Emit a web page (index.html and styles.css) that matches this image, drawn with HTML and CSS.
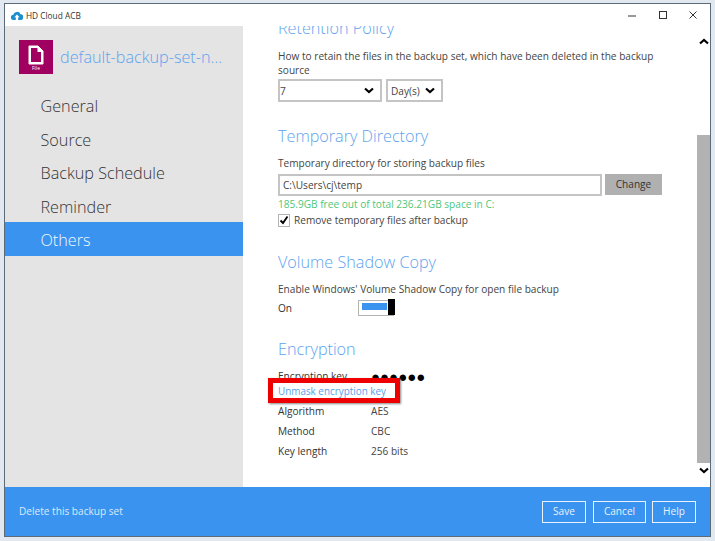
FILE: index.html
```html
<!DOCTYPE html>
<html lang="en">
<head>
<meta charset="utf-8">
<title>HD Cloud ACB</title>
<link rel="stylesheet" href="styles.css">
</head>
<body>
<div class="window">
  <header class="titlebar">
    <svg class="app-icon" viewBox="0 0 12 9" width="12" height="9"><path fill="#1c8fd0" d="M2.6 9A2.6 2.6 0 0 1 2.3 3.8 3.8 3.8 0 0 1 9.5 3.2 2.9 2.9 0 0 1 9.4 9H7.2V6.2H8.6L6 3.6 3.4 6.2H4.8V9Z"/></svg>
    <span class="app-title">HD Cloud ACB</span>
    <div class="win-controls">
      <svg viewBox="0 0 10 10" width="10" height="10"><path d="M1 6H9" stroke="#333" fill="none"/></svg>
      <svg viewBox="0 0 10 10" width="10" height="10"><rect x="1.5" y="1.5" width="7" height="7" stroke="#333" fill="none"/></svg>
      <svg viewBox="0 0 10 10" width="10" height="10"><path d="M1.500 1.500L8.500 8.500M8.500 1.500L1.500 8.500" stroke="#333" fill="none"/></svg>
    </div>
  </header>
  <div class="body">
    <nav class="sidebar">
      <div class="set-head">
        <div class="file-badge">
          <svg viewBox="0 0 16 20" width="16" height="20"><path d="M1 1H10L15 6V19H1Z" fill="#fff" stroke="#fff"/><path d="M3 3H9.500L13 6.500V17H3Z" fill="#a0005f"/><path d="M9.500 2V7H14.500Z" fill="#fff"/></svg>
          <span>File</span>
        </div>
        <span class="set-name">default-backup-set-n...</span>
      </div>
      <a class="nav-item">General</a>
      <a class="nav-item">Source</a>
      <a class="nav-item">Backup Schedule</a>
      <a class="nav-item">Reminder</a>
      <a class="nav-item active">Others</a>
    </nav>
    <main class="pane">
      <div class="scroll">
        <section class="retention">
          <h2>Retention Policy</h2>
          <p class="desc">How to retain the files in the backup set, which have been deleted in the backup source</p>
          <div class="row-selects">
            <div class="select num"><span>7</span><svg class="chev" viewBox="0 0 10 7" width="10" height="7"><path d="M1 1.500L5 5L9 1.500" stroke="#000" stroke-width="2.200" fill="none"/></svg></div>
            <div class="select unit"><span>Day(s)</span><svg class="chev" viewBox="0 0 10 7" width="10" height="7"><path d="M1 1.500L5 5L9 1.500" stroke="#000" stroke-width="2.200" fill="none"/></svg></div>
          </div>
        </section>
        <section class="temp">
          <h2>Temporary Directory</h2>
          <p class="desc">Temporary directory for storing backup files</p>
          <div class="row-path">
            <div class="path">C:\Users\cj\temp</div>
            <div class="change">Change</div>
          </div>
          <p class="free">185.9GB free out of total 236.21GB space in C:</p>
          <div class="check-row">
            <span class="check"><svg viewBox="0 0 10 10" width="10" height="10"><path d="M1.500 5.500L4 8L8.500 1.500" stroke="#000" stroke-width="1.800" fill="none"/></svg></span>
            <span>Remove temporary files after backup</span>
          </div>
        </section>
        <section class="vss">
          <h2>Volume Shadow Copy</h2>
          <p class="desc">Enable Windows' Volume Shadow Copy for open file backup</p>
          <div class="toggle-row">
            <span class="toggle-label">On</span>
            <span class="toggle"><span class="fill"></span><span class="knob"></span></span>
          </div>
        </section>
        <section class="enc">
          <h2>Encryption</h2>
          <div class="kv key"><span class="k">Encryption key</span><span class="dots">●●●●●●</span></div>
          <div class="unmask"><a>Unmask encryption key</a></div>
          <div class="kv"><span class="k">Algorithm</span><span>AES</span></div>
          <div class="kv"><span class="k">Method</span><span>CBC</span></div>
          <div class="kv"><span class="k">Key length</span><span>256 bits</span></div>
        </section>
      </div>
      <div class="scrollbar">
        <svg viewBox="0 0 10 7" width="10" height="7"><path d="M1 5.500L5 2L9 5.500" stroke="#000" stroke-width="2.200" fill="none"/></svg>
        <div class="track"><div class="thumb"></div></div>
        <svg viewBox="0 0 10 7" width="10" height="7"><path d="M1 1.500L5 5L9 1.500" stroke="#000" stroke-width="2.200" fill="none"/></svg>
      </div>
    </main>
  </div>
  <footer class="footer">
    <a class="delete">Delete this backup set</a>
    <div class="buttons">
      <span class="btn save">Save</span>
      <span class="btn cancel">Cancel</span>
      <span class="btn help">Help</span>
    </div>
  </footer>
</div>
</body>
</html>
```
FILE: styles.css
```css
* { box-sizing: border-box; }
html, body { margin: 0; height: 100%; }
body {
  width: 715px;
  height: 541px;
  overflow: hidden;
  background: #e2e8ef;
  padding: 3px 4px 4px 4px;
  font-family: "Open Sans", "Noto Sans", sans-serif;
  font-size: 10.1px;
  color: #444;
}
.window {
  height: 534px;
  border: 1px solid #5d6a78;
  background: #fff;
  display: flex;
  flex-direction: column;
}
.titlebar {
  height: 22px;
  flex: none;
  display: flex;
  align-items: center;
  padding-left: 6px;
  font-size: 8.3px;
  color: #333;
}
.app-icon { margin-right: 3px; }
.win-controls {
  margin-left: auto;
  display: flex;
  gap: 20.500px;
  padding-right: 12px;
}
.body { flex: 1; display: flex; min-height: 0; }
.sidebar {
  width: 238px;
  flex: none;
  background: #e4e4e4;
}
.set-head {
  height: 62px;
  padding: 14px 0 0 14px;
  display: flex;
  align-items: flex-start;
}
.file-badge {
  width: 34px;
  height: 34px;
  background: #a0005f;
  display: flex;
  flex-direction: column;
  align-items: center;
  padding-top: 5px;
  color: #fff;
  font-size: 5px;
  line-height: 7px;
}
.set-name {
  margin: 5px 0 0 7px;
  font-size: 16.200px;
  font-weight: 300;
  line-height: 24px;
  color: #5ea3ee;
  white-space: nowrap;
}
.nav-item {
  display: block;
  height: 33.500px;
  line-height: 36px;
  padding-left: 35.500px;
  font-size: 16.200px;
  font-weight: 300;
  color: #333;
}
.nav-item.active { background: #3a93ee; color: #f2f8ff; }
.pane { flex: 1; display: flex; min-width: 0; overflow: hidden; }
.scroll { flex: 1; min-width: 0; padding-left: 35px; padding-right: 35px; overflow: hidden; }
.retention { margin-top: -9px; }
h2 {
  margin: 0;
  font-size: 16.200px;
  line-height: 22px;
  font-weight: 300;
  color: #5ea3ee;
}
.desc { margin: 9px 0 0; line-height: 14px; }
.retention .desc { margin-top: 10px; }
.row-selects { display: flex; gap: 4px; margin-top: 2px; }
.select {
  height: 23px;
  border: 2px solid #c4c4c4;
  background: #fff;
  display: flex;
  align-items: center;
  justify-content: space-between;
  padding: 0 6px 0 0;
}
.select.num { width: 104px; }
.select.unit { width: 57px; padding-left: 3px; }
.temp { margin-top: 23px; }
.row-path { display: flex; gap: 3px; margin-top: 4px; }
.path {
  width: 324px;
  height: 22px;
  border: 2px solid #c4c4c4;
  line-height: 18px;
  padding-left: 3px;
}
.change {
  width: 57px;
  height: 21px;
  background: #b0b0b0;
  text-align: center;
  line-height: 21px;
  color: #333;
}
.free { margin: 1px 0 0; line-height: 14px; color: #4fc77a; }
.check-row { display: flex; align-items: center; gap: 4px; margin-top: 2px; height: 14px; }
.check {
  width: 12px;
  height: 13px;
  border: 1.500px solid #b4b4b4;
  display: flex;
  align-items: center;
  justify-content: center;
}
.vss { margin-top: 24px; }
.toggle-row { display: flex; align-items: center; margin-top: 3px; height: 17px; }
.toggle-label { width: 80px; font-weight: 500; color: #333; }
.toggle {
  width: 36px;
  height: 16px;
  border: 1.500px solid #b4b4b4;
  position: relative;
  display: block;
}
.fill { position: absolute; left: 2.500px; top: 2.500px; width: 25px; height: 7px; background: #3a93ee; }
.knob { position: absolute; right: -1.500px; top: -1.500px; width: 7px; height: 16px; background: #000; }
.enc { margin-top: 22px; }
.kv { display: flex; height: 20px; line-height: 20px; }
.kv .k { width: 93px; font-weight: 500; color: #333; }
.key { margin-top: 9px; height: 14px; line-height: 14px; }
.dots { font-size: 15px; line-height: 14px; color: #000; }
.unmask {
  position: relative;
  width: 132px;
  height: 25px;
  margin: -5px 0 0 -10px;
  padding-left: 5px;
  border: 5px solid #ee0000;
  box-shadow: 1px 1px 2px #888;
  background: #fff;
  font-size: 9.900px;
  line-height: 16px;
  color: #5a9eea;
}
.unmask + .kv { margin-top: -2px; }
.scrollbar {
  width: 13px;
  flex: none;
  display: flex;
  flex-direction: column;
  align-items: center;
  padding: 12px 0 13px;
}
.track { flex: 1; width: 100%; padding-top: 90px; padding-bottom: 4px; }
.thumb { height: 100%; background: #b2b2b2; }
.footer {
  flex: none;
  height: 49px;
  background: #3a93ee;
  display: flex;
  align-items: center;
  padding: 0 14px 0 14px;
  color: #dbeafb;
}
.delete { margin-bottom: 2px; }
.buttons { margin-left: auto; display: flex; gap: 7px; }
.btn {
  height: 22px;
  line-height: 19px;
  text-align: center;
  border: 1.500px solid #e8f2fd;
  color: #e8f2fd;
}
.save, .help { width: 44px; }
.cancel { width: 53px; }
.cancel + .help { margin-left: -1px; }
```
